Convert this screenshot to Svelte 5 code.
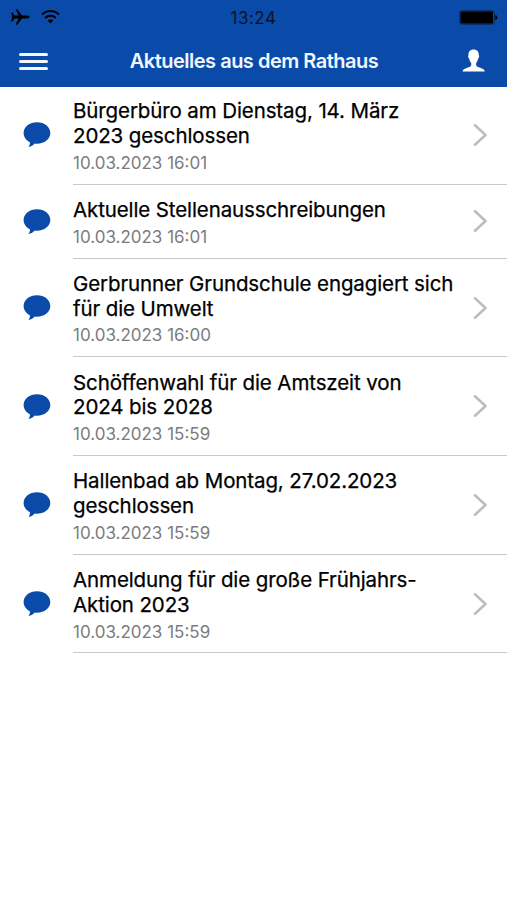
<script>
  const news = [
    { title: 'Bürgerbüro am Dienstag, 14. März\n2023 geschlossen', date: '10.03.2023 16:01' },
    { title: 'Aktuelle Stellenausschreibungen', date: '10.03.2023 16:01' },
    { title: 'Gerbrunner Grundschule engagiert sich\nfür die Umwelt', date: '10.03.2023 16:00' },
    { title: 'Schöffenwahl für die Amtszeit von\n2024 bis 2028', date: '10.03.2023 15:59' },
    { title: 'Hallenbad ab Montag, 27.02.2023\ngeschlossen', date: '10.03.2023 15:59' },
    { title: 'Anmeldung für die große Frühjahrs-\nAktion 2023', date: '10.03.2023 15:59' }
  ]
</script>

<header>
  <div class="status">
    <div class="signals">
      <svg width="19" height="16" viewBox="0 0 19 16">
        <path d="M0.2 3.6H1.5L3.6 6.6H7.6L4.6 0.2H6.2L11.2 6.6H15.8C17.6 6.6 18.7 7.2 18.7 8S17.6 9.4 15.8 9.4H11.2L6.2 15.8H4.6L7.6 9.4H3.6L1.5 12.4H0.2L1.1 8Z" />
      </svg>
      <svg width="19" height="14" viewBox="0 0 19 14">
        <path class="arc" d="M1 4.6C5.8-0.2 13.2-0.2 18 4.6M4.1 7.9C7.2 5 11.8 5 14.9 7.9" />
        <path d="M6.7 10.6C8.3 9.1 10.7 9.1 12.3 10.6L9.5 13.5Z" />
      </svg>
    </div>
    <time>13:24</time>
    <svg class="battery" width="39" height="15" viewBox="0 0 39 15">
      <rect class="shell" x="0.7" y="0.7" width="34.6" height="13.6" rx="2.5" />
      <rect x="1.5" y="1.5" width="32.5" height="12" rx="1" />
      <path d="M36.3 5C38.9 5.5 38.9 9.5 36.3 10Z" />
    </svg>
  </div>
  <nav>
    <button class="menu" aria-label="Menü">
      <span></span>
      <span></span>
      <span></span>
    </button>
    <h1>Aktuelles aus dem Rathaus</h1>
    <button class="profile" aria-label="Profil">
      <svg width="24" height="24" viewBox="0 0 24 24">
        <path d="M11.6 0.5C15.2 0.5 17 2.9 16.8 6.3C17.5 7 17.2 8.8 16.2 9.4C15.9 11.6 14.6 13 14.2 14C14 15.6 14.2 17 15.4 17.7C18 19 22.4 19.2 22.8 22.5H0.6C1 19.2 5.4 19 8 17.7C9.2 17 9.4 15.6 9.2 14C8.6 13 7.4 11.6 7.1 9.4C6.1 8.8 5.8 7 6.5 6.3C6.2 2.9 8 0.5 11.6 0.5Z" />
      </svg>
    </button>
  </nav>
</header>

<ul>
  {#each news as { title, date }}
    <li>
      <svg class="bubble" width="28" height="26" viewBox="0 0 28 26">
        <path d="M14 0.3C21.5 0.3 27.3 5 27.3 11S21.5 21.7 14 21.7C13.2 21.7 12.5 21.6 11.8 21.5C10 23.5 7.8 24.7 5.4 25C6.4 23.8 7 22.3 6.9 20.2C3 18.2 0.6 14.9 0.6 11C0.6 5 6.5 0.3 14 0.3Z" />
      </svg>
      <div class="entry">
        <div class="text">
          <h2>{title}</h2>
          <p>{date}</p>
        </div>
        <svg class="chevron" width="14" height="22" viewBox="0 0 14 22">
          <path d="M2 1.3L12.5 11L2 20.7" />
        </svg>
      </div>
    </li>
  {/each}
</ul>

<style>
  :global(body) {
    background: #fff;
    font-family: Inter, "Liberation Sans", sans-serif;
  }
  header {
    height: 87px;
    background: #0a4aa9;
  }
  .status {
    display: grid;
    grid-template-columns: 1fr auto 1fr;
    align-items: center;
    height: 35px;
    padding: 0 9px 0 11px;
  }
  .signals {
    display: flex;
    align-items: center;
    gap: 11px;
    padding-bottom: 2px;
  }
  .arc {
    fill: none;
    stroke: #000;
    stroke-width: 2;
  }
  time {
    margin-left: -2px;
    font-size: 17px;
    letter-spacing: 0.5px;
    color: #091426;
  }
  .battery {
    justify-self: end;
  }
  .shell {
    fill: none;
    stroke: #06285c;
    stroke-width: 1;
  }
  nav {
    display: grid;
    grid-template-columns: 29px 1fr 24px;
    align-items: center;
    height: 52px;
    padding: 0 21px 0 19px;
  }
  button {
    display: flex;
    padding: 0;
    border: 0;
    background: none;
  }
  .menu {
    flex-direction: column;
    gap: 4px;
    padding-top: 1px;
  }
  .menu span {
    width: 29px;
    height: 3px;
    border-radius: 1.5px;
    background: #f1f6ff;
  }
  .profile svg {
    fill: #fff;
  }
  h1 {
    margin: 0;
    font-size: 20px;
    font-weight: 600;
    letter-spacing: -0.5px;
    text-align: center;
    text-indent: -2px;
    white-space: nowrap;
    color: #f1f6ff;
  }
  ul {
    margin: -1.1px 0 0;
    padding: 0;
    list-style: none;
  }
  li {
    display: flex;
    align-items: center;
    padding-left: 23px;
  }
  .bubble {
    margin-right: 22px;
    fill: #0a4aa9;
  }
  .entry {
    display: flex;
    flex: 1;
    align-items: center;
    justify-content: space-between;
    padding: 13.3px 20px 8.8px 0;
    border-bottom: 1px solid #c8c8c8;
  }
  h2 {
    margin: 0;
    font-size: 20.5px;
    font-weight: 400;
    letter-spacing: -0.11px;
    line-height: 24.7px;
    white-space: pre;
    color: #000;
    -webkit-text-stroke: 0.25px #000;
  }
  p {
    margin: 0;
    padding-top: 3.2px;
    font-size: 17px;
    line-height: 23px;
    color: #7c7c7c;
  }
  .chevron {
    margin-bottom: 4px;
  }
  .chevron path {
    fill: none;
    stroke: #bdbdbd;
    stroke-width: 2.6;
    stroke-linecap: round;
    stroke-linejoin: round;
  }
</style>
